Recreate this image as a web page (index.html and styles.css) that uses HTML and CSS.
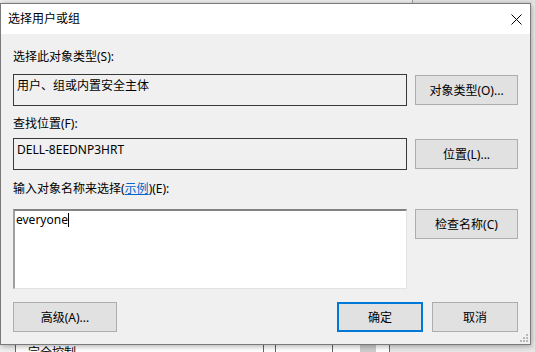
FILE: index.html
```html
<!DOCTYPE html>
<html lang="zh-CN">
<head>
    <meta charset="UTF-8">
    <meta name="viewport" content="width=device-width, initial-scale=1.0">
    <title>选择用户或组</title>
    <link rel="stylesheet" href="styles.css">
</head>
<body>

    <div class="desk-top"><span></span></div>

    <div class="dialog">
        <div class="titlebar">
            <span>选择用户或组</span>
            <svg class="close" width="11" height="11" viewBox="0 0 11 11">
                <path d="M0.5 0.5 L10.5 10.5 M10.5 0.5 L0.5 10.5" stroke="#000" stroke-width="1"/>
            </svg>
        </div>

        <div class="content">
            <div class="label">选择此对象类型(S):</div>
            <div class="row row-mid">
                <div class="box">用户、组或内置安全主体</div>
                <button class="btn">对象类型(O)...</button>
            </div>

            <div class="label label-2">查找位置(F):</div>
            <div class="row row-mid row-2">
                <div class="box">DELL-8EEDNP3HRT</div>
                <button class="btn">位置(L)...</button>
            </div>

            <div class="label label-3">输入对象名称来选择(<a href="#">示例</a>)(E):</div>
            <div class="row row-3">
                <div class="names">everyone<span class="caret"></span></div>
                <button class="btn">检查名称(C)</button>
            </div>

            <div class="footer">
                <button class="btn btn-adv">高级(A)...</button>
                <div class="spacer"></div>
                <button class="btn btn-ok">确定</button>
                <button class="btn btn-cancel">取消</button>
            </div>
        </div>

        <div class="grip">
            <i style="right:2px;bottom:2px"></i>
            <i style="right:5px;bottom:2px"></i>
            <i style="right:8px;bottom:2px"></i>
            <i style="right:2px;bottom:5px"></i>
            <i style="right:5px;bottom:5px"></i>
            <i style="right:2px;bottom:8px"></i>
        </div>
    </div>

    <div class="desk-bottom">
        <div class="cell c1"></div>
        <div class="cell c2">完全控制</div>
        <div class="cell c3"></div>
        <div class="cell c4"></div>
        <div class="cell c5"><span class="thumb"></span></div>
        <div class="cell c6"></div>
    </div>

</body>
</html>
```

FILE: styles.css
```css
body {
    font-family: "Noto Sans", "Noto Sans CJK SC", sans-serif;
    font-size: 12px;
    margin: 0;
    padding: 0;
    width: 535px;
    height: 352px;
    overflow: hidden;
    background-color: #f0f0f0;
    color: #000;
}
.desk-top {
    display: flex;
    height: 3px;
    background-color: #e6e6e6;
}
.desk-top span {
    width: 412px;
    background-color: #f0f0f0;
    border-right: 1px solid #a0a0a0;
}
.dialog {
    position: relative;
    width: 531px;
    height: 342px;
    box-sizing: border-box;
    border: 1px solid #7a7a7a;
    background-color: #f0f0f0;
    box-shadow: 1px 1px 6px rgba(0, 0, 0, 0.35);
    display: flex;
    flex-direction: column;
    z-index: 2;
}
.titlebar {
    height: 30px;
    background-color: #fff;
    display: flex;
    align-items: center;
    justify-content: space-between;
    padding: 0 8px 0 7px;
    line-height: 16px;
}
.content {
    flex: 1;
    display: flex;
    flex-direction: column;
    padding: 15px 12px 0 12px;
}
.label {
    line-height: 16px;
    height: 16px;
}
.label a {
    color: #0066cc;
}
.label-2 {
    margin-top: 10px;
}
.label-3 {
    margin-top: 11px;
}
.row {
    display: flex;
    gap: 8px;
    margin-top: 9px;
}
.row-mid {
    align-items: center;
}
.row-2 {
    margin-top: 6px;
}
.row-3 {
    margin-top: 12px;
    align-items: flex-start;
}
.box {
    width: 394px;
    height: 32px;
    box-sizing: border-box;
    border: 1px solid #383838;
    padding: 3px 3px;
    line-height: 16px;
}
.names {
    width: 394px;
    height: 80px;
    box-sizing: border-box;
    background-color: #fff;
    border-top: 2px solid #828282;
    border-left: 2px solid #a0a0a0;
    border-right: 1px solid #e3e3e3;
    border-bottom: 1px solid #e3e3e3;
    padding: 1px 1px;
    line-height: 16px;
}
.caret {
    display: inline-block;
    width: 1px;
    height: 14px;
    background-color: #000;
    vertical-align: -3px;
}
.btn {
    font-family: inherit;
    font-size: 12px;
    color: #000;
    background-color: #e1e1e1;
    border: 1px solid #adadad;
    width: 103px;
    height: 30px;
    padding: 0;
    box-sizing: border-box;
    flex-shrink: 0;
}
.footer {
    display: flex;
    margin-top: 13px;
    gap: 9px;
}
.spacer {
    flex: 1;
}
.btn-adv {
    width: 104px;
}
.btn-ok {
    width: 86px;
    border: 2px solid #0078d7;
}
.btn-cancel {
    width: 86px;
}
.grip i {
    position: absolute;
    width: 2px;
    height: 2px;
    background-color: #b8b8b8;
}
.desk-bottom {
    display: flex;
    height: 10px;
    overflow: hidden;
    background-color: #fff;
}
.cell {
    border-left: 1px solid #646464;
    line-height: 16px;
    margin-top: -6px;
    padding-top: 6px;
}
.c1 {
    width: 15px;
    border-left: none;
    background-color: #f0f0f0;
}
.c2 {
    width: 235px;
    padding-left: 12px;
}
.c3 {
    width: 11px;
}
.c4 {
    width: 56px;
}
.c5 {
    width: 56px;
    position: relative;
}
.thumb {
    position: absolute;
    left: 27px;
    top: 0;
    width: 16px;
    height: 16px;
    background-color: #cdcdcd;
}
.c6 {
    flex: 1;
    background-color: #e8e8e8;
}
```
